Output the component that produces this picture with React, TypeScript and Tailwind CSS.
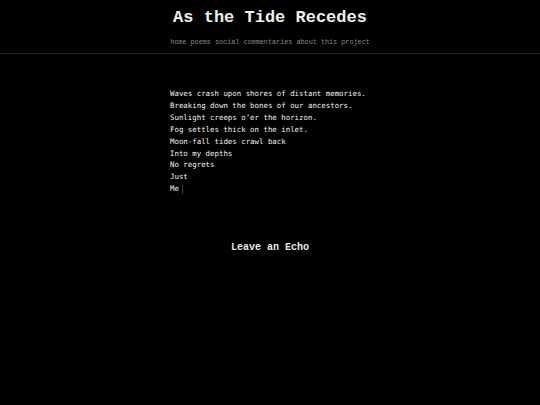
import React from "react";

const lines = [
  "Waves crash upon shores of distant memories.",
  "Breaking down the bones of our ancestors.",
  "Sunlight creeps o\u2019er the horizon.",
  "Fog settles thick on the inlet.",
  "Moon-fall tides crawl back",
  "Into my depths",
  "No regrets",
  "Just",
];

export default function App() {
  return (
    <div className="min-h-[405px] w-full bg-black text-[#eeeeee]">
      <header className="flex flex-col items-center border-b border-[#222] pt-[8px] pb-[6px]">
        <h1 className="font-['Liberation_Mono',monospace] text-[17px] font-bold leading-[20px] text-[#f0f0f0]">
          As the Tide Recedes
        </h1>
        <nav className="mt-[10px] flex gap-[4px] font-['Liberation_Mono',monospace] text-[6.8px] leading-[9px] text-[#8a8a8a]">
          <span>home</span>
          <span>poems</span>
          <span>social commentaries</span>
          <span>about this project</span>
        </nav>
      </header>
      <main className="flex flex-col items-center">
        <div className="mt-[34px] w-[200px] font-['DejaVu_Sans_Mono',monospace] text-[7.4px] leading-[11.9px] text-[#f2f2f2]">
          {lines.map((l) => (
            <div key={l}>{l}</div>
          ))}
          <div className="flex items-center">
            <span>Me</span>
            <span className="ml-[3px] inline-block h-[9px] w-[1px] bg-[#1f4a44]" />
          </div>
        </div>
        <h2 className="mt-[46px] font-['Liberation_Mono',monospace] text-[10px] font-bold leading-[14px] text-[#e8e8e8]">
          Leave an Echo
        </h2>
      </main>
    </div>
  );
}
